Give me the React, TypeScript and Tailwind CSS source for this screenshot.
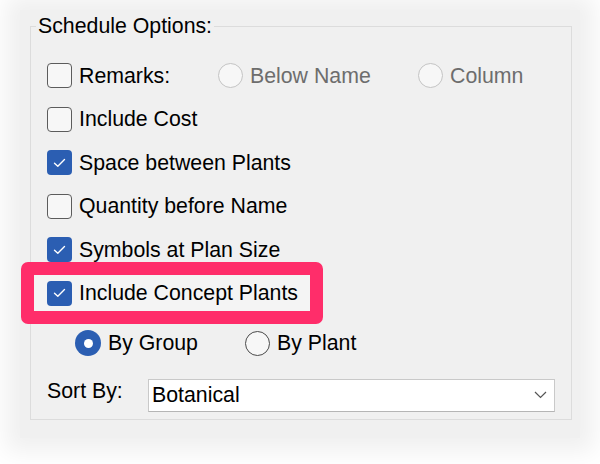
import { ReactNode } from 'react';

function Checkbox({ checked }: { checked?: boolean }) {
  if (checked) {
    return (
      <span className="flex h-[25px] w-[25px] shrink-0 items-center justify-center rounded-[4px] bg-[#2b5eb2]">
        <svg width="13" height="10" viewBox="0 0 13 10" fill="none">
          <path d="M1.5 5.2 L4.8 8.3 L11.5 1.6" stroke="white" strokeWidth="1.4" strokeLinecap="round" strokeLinejoin="round" />
        </svg>
      </span>
    );
  }
  return <span className="h-[25px] w-[25px] shrink-0 rounded-[4px] border-[1.5px] border-[#5c5c5c] bg-[#f7f7f7]" />;
}

function Radio({ checked, disabled }: { checked?: boolean; disabled?: boolean }) {
  if (checked) {
    return (
      <span className="flex h-[26px] w-[26px] shrink-0 items-center justify-center rounded-full bg-[#2b5eb2]">
        <span className="h-[9px] w-[9px] rounded-full bg-white" />
      </span>
    );
  }
  return (
    <span
      className={
        disabled
          ? 'h-[25px] w-[25px] shrink-0 rounded-full border-[1.5px] border-[#c4c4c4] bg-[#f7f7f7]'
          : 'h-[25px] w-[25px] shrink-0 rounded-full border-[1.5px] border-[#4a4a4a] bg-[#f7f7f7]'
      }
    />
  );
}

function CheckRow({ checked, children }: { checked?: boolean; children: ReactNode }) {
  return (
    <div className="flex h-[43.5px] items-center gap-[7px]">
      <Checkbox checked={checked} />
      <span>{children}</span>
    </div>
  );
}

export default function App() {
  return (
    <div
      className="h-[464px] w-[600px] overflow-hidden bg-white px-[20px] pt-[10px] text-[21.3px] leading-[24px] text-black"
      style={{ fontFamily: '"Liberation Sans", Arial, sans-serif' }}
    >
      <div className="h-[428px] bg-[#f0f0f0] pt-[4px] shadow-[0_0_22px_14px_#f0f0f0]">
        <fieldset className="ml-[10px] h-[406px] w-[542px] border border-[#dcdcdc] pl-[16px]">
          <legend className="-ml-[11px] px-[2px]">Schedule Options:</legend>

          <div className="pt-[16px]">
            <div className="flex h-[43.5px] items-center">
              <div className="flex w-[171px] items-center gap-[7px]">
                <Checkbox />
                <span>Remarks:</span>
              </div>
              <div className="flex w-[200px] items-center gap-[7px] text-[#6d6d6d]">
                <Radio disabled />
                <span>Below Name</span>
              </div>
              <div className="flex items-center gap-[7px] text-[#6d6d6d]">
                <Radio disabled />
                <span>Column</span>
              </div>
            </div>
            <CheckRow>Include Cost</CheckRow>
            <CheckRow checked>Space between Plants</CheckRow>
            <CheckRow>Quantity before Name</CheckRow>
            <CheckRow checked>Symbols at Plan Size</CheckRow>

            <div className="-ml-[26px] flex h-[43.5px] items-center">
              <div className="flex h-[62px] w-[302px] items-center gap-[7px] rounded-[7px] border-[13px] border-[#ff2d6a] bg-[#f4f4f4] pl-[13px]">
                <Checkbox checked />
                <span>Include Concept Plants</span>
              </div>
            </div>

            <div className="mt-[6.5px] flex h-[43.5px] items-center pl-[28px]">
              <div className="flex w-[170px] items-center gap-[7px]">
                <Radio checked />
                <span>By Group</span>
              </div>
              <div className="flex items-center gap-[7px]">
                <Radio />
                <span>By Plant</span>
              </div>
            </div>

            <div className="mt-[13.5px] flex items-center">
              <span className="w-[101px] -translate-y-[4px]">Sort By:</span>
              <div className="flex h-[33px] w-[407px] items-center justify-between border border-[#c9c9c9] border-b-[#b5b5b5] bg-white pl-[3px] pr-[7px]">
                <span>Botanical</span>
                <svg width="13" height="8" viewBox="0 0 13 8" fill="none">
                  <path d="M1 1 L6.5 6.5 L12 1" stroke="#555" strokeWidth="1.2" />
                </svg>
              </div>
            </div>
          </div>
        </fieldset>
      </div>
    </div>
  );
}
